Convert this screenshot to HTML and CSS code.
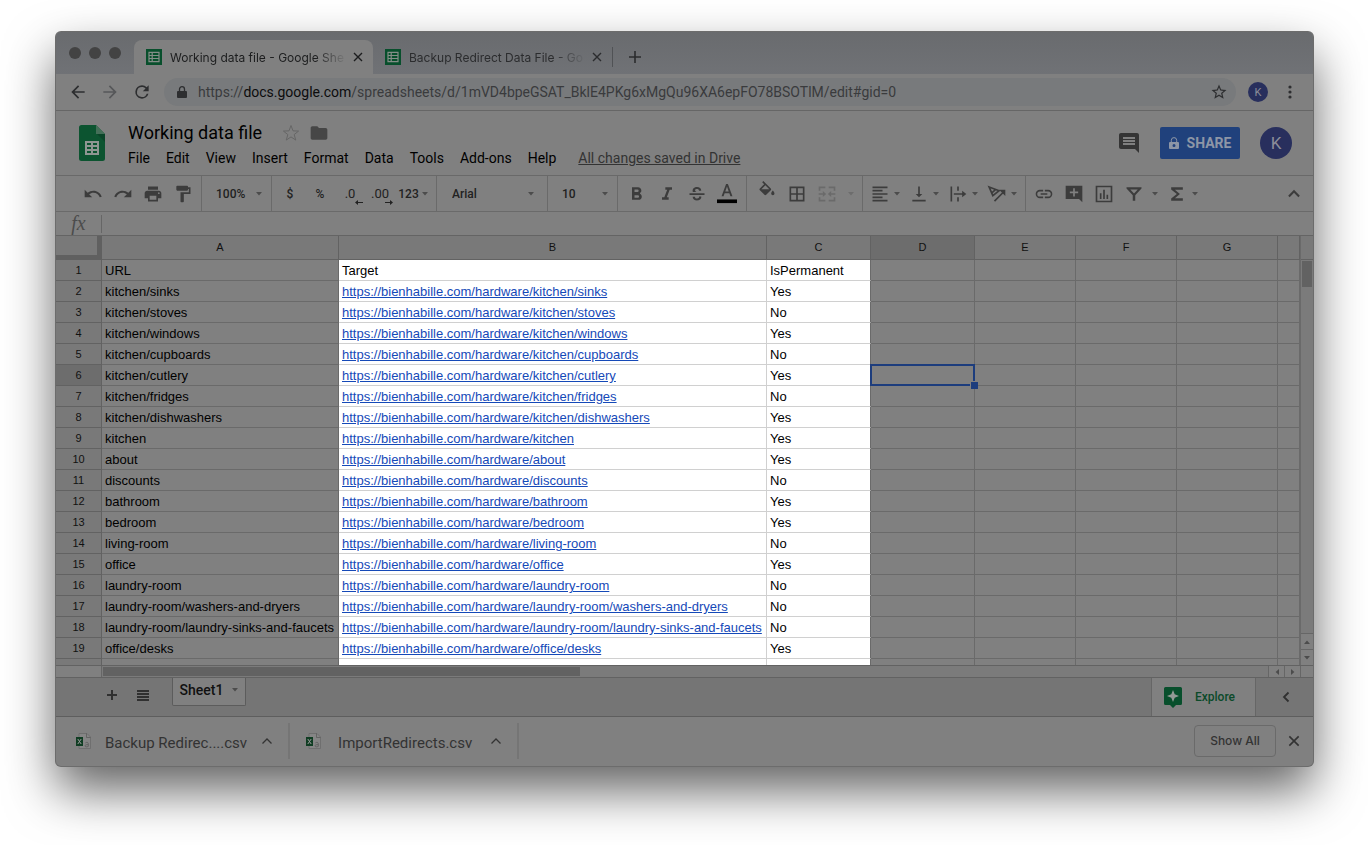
FILE: index.html
```html
<!DOCTYPE html>
<html lang="en">
<head>
<meta charset="utf-8">
<title>Working data file - Google Sheets</title>
<link rel="stylesheet" href="styles.css">
</head>
<body>
<svg class="defs" aria-hidden="true">
  <symbol id="caret" viewBox="0 0 6 4"><path d="M0 0h6L3 3.4z"/></symbol>
  <symbol id="close" viewBox="0 0 12 12"><path d="M2 2l8 8M10 2l-8 8" fill="none" stroke="currentColor" stroke-width="1.4"/></symbol>
  <symbol id="sheet" viewBox="0 0 16 16"><path fill="#084f2c" d="M0 0h16v16H0z"/><path fill="none" stroke="#858d88" stroke-width="1.2" d="M3 3.4h10v9.2H3zM3 6.5h10M3 9.5h10M6.2 3.4v9.2"/></symbol>
  <symbol id="up" viewBox="0 0 12 8"><path d="M1.5 6.5L6 2l4.500 4.500" fill="none" stroke="currentColor" stroke-width="1.300"/></symbol>
  <symbol id="csv" viewBox="0 0 16 16"><path fill="#858585" stroke="#6a6a6a" stroke-width=".8" d="M3 .5h8L14.500 4v11.500H3z"/><path fill="none" stroke="#5c5c5c" stroke-width=".8" d="M10.500.5V4.500h4M9.300 10c1-1 3-.8 3 .6v2.800c-1.800 1-3.300.4-3.300-.6s1.500-1.200 3.200-1.200"/><path fill="#103d23" d="M0 4h7v9H0z"/><path stroke="#999" d="M1.800 6l3.400 5M5.200 6l-3.400 5"/></symbol>
</svg>
<main class="window">
  <header class="tabs">
    <div class="lights"><i></i><i></i><i></i></div>
    <div class="tab active">
      <svg class="favicon"><use href="#sheet"/></svg><span class="tab-title">Working data file - Google Sheets</span>
      <button aria-label="Close tab"><svg class="x"><use href="#close"/></svg></button>
    </div>
    <div class="tab">
      <svg class="favicon"><use href="#sheet"/></svg><span class="tab-title">Backup Redirect Data File - Google Sheets</span>
      <button aria-label="Close tab"><svg class="x"><use href="#close"/></svg></button>
    </div>
    <button class="new-tab" aria-label="New tab"><svg viewBox="0 0 14 14"><path d="M7 1v12M1 7h12" fill="none" stroke="currentColor" stroke-width="1.600"/></svg></button>
  </header>

  <nav class="nav">
    <button aria-label="Back"><svg viewBox="0 0 24 24"><path d="M20 11H7.830l5.590-5.590L12 4l-8 8 8 8 1.410-1.410L7.830 13H20z"/></svg></button>
    <button aria-label="Forward" class="faint"><svg viewBox="0 0 24 24"><path d="M12 4l-1.410 1.410L16.170 11H4v2h12.170l-5.580 5.590L12 20l8-8z"/></svg></button>
    <button aria-label="Reload"><svg viewBox="0 0 24 24"><path d="M17.650 6.350A7.960 7.960 0 0 0 12 4a8 8 0 1 0 7.730 10h-2.080A6 6 0 1 1 12 6c1.660 0 3.140.690 4.220 1.780L13 11h7V4z"/></svg></button>
    <div class="omnibox">
      <svg class="lock" viewBox="0 0 10 12"><path d="M1 5h8a1 1 0 0 1 1 1v5a1 1 0 0 1-1 1H1a1 1 0 0 1-1-1V6a1 1 0 0 1 1-1z"/><path d="M2.500 6V3.200a2.500 2.500 0 0 1 5 0V6" fill="none" stroke="currentColor" stroke-width="1.300"/></svg>
      <a class="url" href="#gid=0">https://<b>docs.google.com</b>/spreadsheets/d/1mVD4bpeGSAT_BklE4PKg6xMgQu96XA6epFO78BSOTlM/edit#gid=0</a>
      <button aria-label="Bookmark"><svg viewBox="0 0 24 24"><path d="M22 9.240l-7.190-.620L12 2 9.190 8.630 2 9.240l5.460 4.730L5.820 21 12 17.270 18.180 21l-1.630-7.030zM12 15.400l-3.760 2.270 1-4.280-3.320-2.880 4.380-.380L12 6.100l1.710 4.040 4.380.380-3.320 2.880 1 4.280z"/></svg></button>
    </div>
    <button class="avatar small">K</button>
    <button aria-label="Menu" class="more"><svg viewBox="0 0 4 14"><circle cx="2" cy="2" r="1.600"/><circle cx="2" cy="7" r="1.600"/><circle cx="2" cy="12" r="1.600"/></svg></button>
  </nav>

  <header class="doc">
    <svg class="logo" viewBox="0 0 26 36"><path fill="#0c5430" d="M2.500 0H17l9 9v24.500a2.500 2.500 0 0 1-2.500 2.500h-21A2.500 2.500 0 0 1 0 33.500v-31A2.500 2.500 0 0 1 2.500 0z"/><path fill="#0a4428" d="M18 9h8v8z"/><path fill="#446f58" d="M17 0l9 9h-9z"/><path fill="#8f9692" fill-rule="evenodd" d="M6 16h14v14H6zm2 2v2h4v-2zm6 0v2h4v-2zm-6 4v2h4v-2zm6 0v2h4v-2zm-6 4v2h4v-2zm6 0v2h4v-2z"/></svg>
    <div class="doc-info">
      <div class="title-row"><h1>Working data file</h1>
        <button aria-label="Star" class="faint"><svg viewBox="0 0 24 24"><path fill="none" stroke="currentColor" stroke-width="1.200" d="M12 3l2.400 6.400 6.700.300-5.300 4.200 1.900 6.600-5.700-3.800-5.700 3.800 1.900-6.600-5.300-4.200 6.700-.300z"/></svg></button>
        <button aria-label="Move to folder"><svg viewBox="0 0 24 24"><path d="M10 4H4c-1.100 0-2 .900-2 2v12c0 1.100.900 2 2 2h16c1.100 0 2-.900 2-2V8c0-1.100-.900-2-2-2h-8z"/></svg></button>
      </div>
      <div class="menus"><button>File</button><button>Edit</button><button>View</button><button>Insert</button><button>Format</button><button>Data</button><button>Tools</button><button>Add-ons</button><button>Help</button><a href="#saved">All changes saved in Drive</a></div>
    </div>
    <button class="comments" aria-label="Comments"><svg viewBox="0 0 24 24"><path d="M21.990 4c0-1.100-.890-2-1.990-2H4c-1.100 0-2 .900-2 2v12c0 1.100.900 2 2 2h14l4 4zM18 14H6v-2h12zm0-3H6V9h12zm0-3H6V6h12z"/></svg></button>
    <button class="share"><svg viewBox="0 0 10 13"><path fill-rule="evenodd" d="M1 5h8a1 1 0 0 1 1 1v5a1 1 0 0 1-1 1H1a1 1 0 0 1-1-1V6a1 1 0 0 1 1-1zm4 2a1.500 1.500 0 1 0 0 3 1.500 1.500 0 0 0 0-3z"/><path d="M2.300 5V3.300a2.700 2.700 0 0 1 5.400 0V5" fill="none" stroke="currentColor"/></svg>SHARE</button>
    <button class="avatar">K</button>
  </header>

  <div class="toolbar">
    <div class="group first">
      <button aria-label="Undo"><svg viewBox="0 0 24 24"><path d="M12.500 8c-2.650 0-5.050.990-6.900 2.600L2 7v9h9l-3.620-3.620c1.390-1.160 3.160-1.880 5.120-1.880 3.540 0 6.550 2.310 7.600 5.500l2.370-.780C21.080 11.030 17.150 8 12.500 8z"/></svg></button>
      <button aria-label="Redo"><svg viewBox="0 0 24 24"><path d="M18.400 10.600C16.550 8.990 14.150 8 11.500 8c-4.650 0-8.580 3.030-9.960 7.220L3.900 16c1.050-3.190 4.050-5.500 7.600-5.500 1.950 0 3.730.720 5.120 1.880L13 16h9V7z"/></svg></button>
      <button aria-label="Print"><svg viewBox="0 0 24 24"><path d="M19 8H5c-1.660 0-3 1.340-3 3v6h4v4h12v-4h4v-6c0-1.660-1.340-3-3-3zm-3 11H8v-5h8zm3-7a1 1 0 1 1 0-2 1 1 0 0 1 0 2zm-1-9H6v4h12z"/></svg></button>
      <button aria-label="Paint format"><svg viewBox="0 0 24 24"><path d="M18 4V3c0-.550-.450-1-1-1H5c-.550 0-1 .450-1 1v4c0 .550.450 1 1 1h12c.550 0 1-.450 1-1V6h1v4H9v11c0 .550.450 1 1 1h2c.550 0 1-.450 1-1v-9h8V4z"/></svg></button>
    </div>
    <div class="group pick short"><select aria-label="Zoom"><option>100%</option></select><svg class="caret"><use href="#caret"/></svg></div>
    <div class="group numbers">
      <button>$</button><button>%</button>
      <button class="decimal" aria-label="Decrease decimal places">.0<svg viewBox="0 0 8 5"><path d="M0 2.500L3 0v2h5v1H3v2z"/></svg></button>
      <button class="decimal" aria-label="Increase decimal places">.00<svg viewBox="0 0 8 5"><path d="M8 2.500L5 0v2H0v1h5v2z"/></svg></button>
      <button class="formats">123<svg class="caret"><use href="#caret"/></svg></button>
    </div>
    <div class="group pick long"><select aria-label="Font"><option>Arial</option></select><svg class="caret"><use href="#caret"/></svg></div>
    <div class="group pick short"><select aria-label="Font size"><option>10</option></select><svg class="caret"><use href="#caret"/></svg></div>
    <div class="group text">
      <button aria-label="Bold"><svg viewBox="0 0 24 24"><path d="M15.600 10.790c.970-.670 1.650-1.770 1.650-2.790 0-2.260-1.750-4-4-4H6v15h8.040c2.090 0 3.710-1.700 3.710-3.790 0-1.520-.860-2.820-2.150-3.420zM9 6.500h3.500a1.500 1.500 0 0 1 0 3H9zm4 10H9v-3h4a1.500 1.500 0 0 1 0 3z"/></svg></button>
      <button aria-label="Italic"><svg viewBox="0 0 24 24"><path d="M10 4v3h2.210l-3.420 9H6v3h8v-3h-2.210l3.420-9H18V4z"/></svg></button>
      <button aria-label="Strikethrough"><svg viewBox="0 0 24 24"><path d="M3 11h18v2.200H3zM7 9.500C6 5.500 9 3.700 12 3.700c3 0 5 1.600 5.100 4.300h-2.700c0-1.400-.900-2.100-2.400-2.100-1.400 0-2.300.600-2.300 1.700 0 .800.500 1.400 1.600 1.900zM6.800 15.200h2.700c.1 1.500 1.200 2.200 2.700 2.200 1.400 0 2.300-.600 2.300-1.700 0-.300 0-.500-.1-.700h2.700c.4 3-2.100 4.700-5 4.700-3.200 0-5.300-1.800-5.300-4.500z"/></svg></button>
      <button aria-label="Text color"><svg class="tall" viewBox="0 0 22 22"><path d="M10 0h2l5 13.500h-2.200l-1.200-3.400H8.400l-1.200 3.400H5zm1 2.700L9.100 8.200h3.800z"/><path fill="#000" d="M0 17h22v4H0z"/></svg></button>
    </div>
    <div class="group cells">
      <button aria-label="Fill color"><svg class="raised" viewBox="0 0 24 24"><path d="M16.560 8.940L7.620 0 6.210 1.410l2.380 2.380-5.150 5.150a1.490 1.490 0 0 0 0 2.120l5.500 5.500c.290.290.680.440 1.060.440s.770-.150 1.060-.440l5.500-5.500c.590-.580.590-1.530 0-2.120zM5.210 10L10 5.210 14.790 10zM19 11.500s-2 2.170-2 3.500a2 2 0 0 0 4 0c0-1.330-2-3.500-2-3.500z"/></svg></button>
      <button aria-label="Borders"><svg viewBox="0 0 24 24"><path d="M3 3v18h18V3zm8 16H5v-6h6zm0-8H5V5h6zm8 8h-6v-6h6zm0-8h-6V5h6z"/></svg></button>
      <button aria-label="Merge cells" class="faint"><svg viewBox="0 0 24 24"><path d="M2 3h8v2H4v3H2zm12 0h8v5h-2V5h-6zM2 16h2v3h6v2H2zm18 0h2v5h-8v-2h6zM2 11h5V8.500l4 3.500-4 3.500V13H2zm20 0h-5V8.500L13 12l4 3.500V13h5z"/></svg></button>
      <svg class="caret faint"><use href="#caret"/></svg>
    </div>
    <div class="group align">
      <button aria-label="Horizontal align"><svg viewBox="0 0 24 24"><path d="M3 3h18v2H3zm0 4h12v2H3zm0 4h18v2H3zm0 4h12v2H3zm0 4h18v2H3z"/></svg><svg class="caret"><use href="#caret"/></svg></button>
      <button aria-label="Vertical align"><svg viewBox="0 0 24 24"><path d="M16 12h-3V3h-2v9H8l4 4zM4 19v2h16v-2z"/></svg><svg class="caret"><use href="#caret"/></svg></button>
      <button aria-label="Text wrapping"><svg viewBox="0 0 24 24"><path d="M3 3h2v18H3zm8 0h2v5h-2zm0 13h2v5h-2zM7 11h10V8l5 4-5 4v-3H7z"/></svg><svg class="caret"><use href="#caret"/></svg></button>
      <button aria-label="Text rotation"><svg viewBox="0 0 24 24"><path fill="none" stroke="currentColor" stroke-width="2" d="M2.500 3.500l12 4.500-7.500 6zM10.500 6.500L5.500 11M9 20.500L19 10.500"/><path d="M14.500 7H22v7.500z"/></svg><svg class="caret"><use href="#caret"/></svg></button>
    </div>
    <div class="group last">
      <button aria-label="Insert link"><svg viewBox="0 0 24 24"><path d="M3.900 12A3.100 3.100 0 0 1 7 8.900h4V7H7a5 5 0 0 0 0 10h4v-1.900H7A3.100 3.100 0 0 1 3.900 12zM8 13h8v-2H8zm9-6h-4v1.900h4a3.100 3.100 0 0 1 0 6.200h-4V17h4a5 5 0 0 0 0-10z"/></svg></button>
      <button aria-label="Insert comment"><svg viewBox="0 0 24 24"><path fill-rule="evenodd" d="M2 2h20v20l-4-4H2zm9 3v4H7v2h4v4h2v-4h4V9h-4V5z"/></svg></button>
      <button aria-label="Insert chart"><svg viewBox="0 0 24 24"><path fill-rule="evenodd" d="M2 2h20v20H2zm2 2v16h16V4zm3 7h2v7H7zm4-4h2v11h-2zm4 6h2v5h-2z"/></svg></button>
      <button aria-label="Filter"><svg viewBox="0 0 24 24"><path fill-rule="evenodd" d="M3 4h18v1.500l-7.500 8V20h-3v-6.500L3 5.500zm4.500 2.500l4.500 5 4.500-5z"/></svg></button><svg class="caret"><use href="#caret"/></svg>
      <button aria-label="Functions"><svg viewBox="0 0 24 24"><path d="M19 4H5v2.500l6.800 5.500L5 17.500V20h14v-3H9.500l6-5-6-5H19z"/></svg></button><svg class="caret tight"><use href="#caret"/></svg>
    </div>
    <button class="collapse" aria-label="Hide menus"><svg viewBox="0 0 24 24"><path d="M12 7l-7 7 1.800 1.800L12 10.600l5.200 5.200L19 14z"/></svg></button>
  </div>

  <div class="formula"><label for="fx">fx</label><input id="fx" type="text" value=""></div>

  <section class="grid">
    <div class="sheet">
      <table>
        <colgroup><col class="c-num"><col class="c-a"><col class="c-b"><col class="c-c"><col class="c-c"><col class="c-e"><col class="c-e"><col class="c-e"><col></colgroup>
        <thead><tr><th class="corner"></th><th>A</th><th>B</th><th>C</th><th class="sel">D</th><th>E</th><th>F</th><th>G</th><th></th></tr></thead>
        <tbody>
          <tr><th>1</th><td>URL</td><td>Target</td><td>IsPermanent</td><td></td><td></td><td></td><td></td><td></td></tr>
          <tr><th>2</th><td>kitchen/sinks</td><td><a href="#2">https://bienhabille.com/hardware/kitchen/sinks</a></td><td>Yes</td><td></td><td></td><td></td><td></td><td></td></tr>
          <tr><th>3</th><td>kitchen/stoves</td><td><a href="#3">https://bienhabille.com/hardware/kitchen/stoves</a></td><td>No</td><td></td><td></td><td></td><td></td><td></td></tr>
          <tr><th>4</th><td>kitchen/windows</td><td><a href="#4">https://bienhabille.com/hardware/kitchen/windows</a></td><td>Yes</td><td></td><td></td><td></td><td></td><td></td></tr>
          <tr><th>5</th><td>kitchen/cupboards</td><td><a href="#5">https://bienhabille.com/hardware/kitchen/cupboards</a></td><td>No</td><td></td><td></td><td></td><td></td><td></td></tr>
          <tr><th class="sel">6</th><td>kitchen/cutlery</td><td><a href="#6">https://bienhabille.com/hardware/kitchen/cutlery</a></td><td>Yes</td><td class="cursor"></td><td></td><td></td><td></td><td></td></tr>
          <tr><th>7</th><td>kitchen/fridges</td><td><a href="#7">https://bienhabille.com/hardware/kitchen/fridges</a></td><td>No</td><td></td><td></td><td></td><td></td><td></td></tr>
          <tr><th>8</th><td>kitchen/dishwashers</td><td><a href="#8">https://bienhabille.com/hardware/kitchen/dishwashers</a></td><td>Yes</td><td></td><td></td><td></td><td></td><td></td></tr>
          <tr><th>9</th><td>kitchen</td><td><a href="#9">https://bienhabille.com/hardware/kitchen</a></td><td>Yes</td><td></td><td></td><td></td><td></td><td></td></tr>
          <tr><th>10</th><td>about</td><td><a href="#10">https://bienhabille.com/hardware/about</a></td><td>Yes</td><td></td><td></td><td></td><td></td><td></td></tr>
          <tr><th>11</th><td>discounts</td><td><a href="#11">https://bienhabille.com/hardware/discounts</a></td><td>No</td><td></td><td></td><td></td><td></td><td></td></tr>
          <tr><th>12</th><td>bathroom</td><td><a href="#12">https://bienhabille.com/hardware/bathroom</a></td><td>Yes</td><td></td><td></td><td></td><td></td><td></td></tr>
          <tr><th>13</th><td>bedroom</td><td><a href="#13">https://bienhabille.com/hardware/bedroom</a></td><td>Yes</td><td></td><td></td><td></td><td></td><td></td></tr>
          <tr><th>14</th><td>living-room</td><td><a href="#14">https://bienhabille.com/hardware/living-room</a></td><td>No</td><td></td><td></td><td></td><td></td><td></td></tr>
          <tr><th>15</th><td>office</td><td><a href="#15">https://bienhabille.com/hardware/office</a></td><td>Yes</td><td></td><td></td><td></td><td></td><td></td></tr>
          <tr><th>16</th><td>laundry-room</td><td><a href="#16">https://bienhabille.com/hardware/laundry-room</a></td><td>No</td><td></td><td></td><td></td><td></td><td></td></tr>
          <tr><th>17</th><td>laundry-room/washers-and-dryers</td><td><a href="#17">https://bienhabille.com/hardware/laundry-room/washers-and-dryers</a></td><td>No</td><td></td><td></td><td></td><td></td><td></td></tr>
          <tr><th>18</th><td>laundry-room/laundry-sinks-and-faucets</td><td><a href="#18">https://bienhabille.com/hardware/laundry-room/laundry-sinks-and-faucets</a></td><td>No</td><td></td><td></td><td></td><td></td><td></td></tr>
          <tr><th>19</th><td>office/desks</td><td><a href="#19">https://bienhabille.com/hardware/office/desks</a></td><td>Yes</td><td></td><td></td><td></td><td></td><td></td></tr>
          <tr><th>20</th><td>office/filing-cabinets</td><td><a href="#20">https://bienhabille.com/hardware/office/filing-cabinets</a></td><td>Yes</td><td></td><td></td><td></td><td></td><td></td></tr>
        </tbody>
      </table>
    </div>
    <div class="vscroll"><div class="vtop"></div><div class="vtrack"><div class="vthumb"></div></div><button aria-label="Scroll up"><svg class="caret flip"><use href="#caret"/></svg></button><button aria-label="Scroll down"><svg class="caret"><use href="#caret"/></svg></button></div>
  </section>
  <div class="hscroll"><div class="hhead"></div><div class="htrack"><div class="hthumb"></div></div><button aria-label="Scroll left"><svg class="caret left"><use href="#caret"/></svg></button><button aria-label="Scroll right"><svg class="caret right"><use href="#caret"/></svg></button><div class="hend"></div></div>

  <footer class="sheets">
    <button aria-label="Add sheet" class="add"><svg viewBox="0 0 12 12"><path d="M6 1v10M1 6h10" fill="none" stroke="currentColor" stroke-width="2"/></svg></button>
    <button aria-label="All sheets" class="all"><svg viewBox="0 0 12 12"><path d="M0 1h12v2H0zm0 3h12v2H0zm0 3h12v2H0zm0 3h12v2H0z"/></svg></button>
    <button class="sheet-tab">Sheet1<svg class="caret"><use href="#caret"/></svg></button>
    <button class="explore"><svg viewBox="0 0 18 21"><path fill="#084f2c" d="M1.500 0h15A1.500 1.500 0 0 1 18 1.500v15a1.500 1.500 0 0 1-1.500 1.500H12l-3 3-3-3H1.500A1.500 1.500 0 0 1 0 16.500v-15A1.500 1.500 0 0 1 1.500 0z"/><path fill="#929a95" d="M9 3l1.700 4.300L15 9l-4.300 1.700L9 15l-1.700-4.300L3 9l4.300-1.700z"/></svg>Explore</button>
    <button class="panel" aria-label="Show side panel"><svg viewBox="0 0 8 12"><path d="M6.500 1.500L2 6l4.500 4.500" fill="none" stroke="currentColor" stroke-width="1.800"/></svg></button>
  </footer>

  <footer class="downloads">
    <div class="file first-file"><svg class="csv"><use href="#csv"/></svg><a href="#backup">Backup Redirec....csv</a><button aria-label="Options"><svg class="up"><use href="#up"/></svg></button></div>
    <div class="file second-file"><svg class="csv"><use href="#csv"/></svg><a href="#import">ImportRedirects.csv</a><button aria-label="Options"><svg class="up"><use href="#up"/></svg></button></div>
    <button class="show-all">Show All</button>
    <button class="dismiss" aria-label="Close downloads bar"><svg class="x"><use href="#close"/></svg></button>
  </footer>
</main>
</body>
</html>
```
FILE: styles.css
```css
* { box-sizing: border-box; }
body {
  margin: 0;
  min-height: 100vh;
  padding: 32px 55px 79px 56px;
  display: flex;
  background: #fff;
  font-family: Roboto, sans-serif;
  color: #000;
}
svg { display: block; fill: currentColor; flex: none; }
button { border: 0; padding: 0; margin: 0; background: none; font: inherit; color: inherit; display: flex; align-items: center; justify-content: center; flex: none; }
.defs { position: absolute; width: 0; height: 0; }
.faint { color: #6a6a6a; }
.caret { width: 6px; height: 4px; color: #4c4c4c; }
.caret.faint { color: #6d6d6d; }
.x { width: 12px; height: 12px; }

.window {
  flex: 1;
  min-width: 0;
  height: calc(100vh - 111px);
  min-height: 480px;
  display: flex;
  flex-direction: column;
  background: #808080;
  border-radius: 5px;
  box-shadow: 0 0 0 1px #6c6c6c, 0 24px 50px rgba(0, 0, 0, .62);
}
.window > * { flex: none; }

/* Browser tabs */
.tabs { display: flex; align-items: flex-end; height: 42px; background: linear-gradient(#696b6e, #707276); border-radius: 5px 5px 0 0; color: #2b2c2e; }
.lights { display: flex; gap: 8px; width: 78px; padding-left: 13px; align-self: center; }
.lights i { width: 12px; height: 12px; border-radius: 50%; background: #434343; }
.tab { display: flex; align-items: center; width: 239px; height: 34px; padding: 0 9px 0 12px; gap: 8px; font: 12px Inter, sans-serif; }
.tab.active { background: #808080; border-radius: 8px 8px 0 0; color: #1c1d1e; }
.favicon { width: 16px; height: 16px; }
.tab-title { flex: 1; min-width: 0; overflow: hidden; white-space: nowrap; mask-image: linear-gradient(90deg, #000 145px, transparent 177px); }
.new-tab { width: 44px; height: 20px; margin-bottom: 7px; border-left: 1px solid #505255; }
.new-tab svg { width: 14px; height: 14px; }

/* Address bar */
.nav { display: flex; align-items: center; height: 37px; padding: 0 17px 0 12px; border-bottom: 1px solid #666; color: #2d2e30; }
.nav svg { width: 20px; height: 20px; }
.nav > button { width: 20px; margin-right: 12px; }
.nav .faint { color: #565759; }
.omnibox { flex: 1; min-width: 0; display: flex; align-items: center; height: 28px; padding: 0 8px 0 13px; border-radius: 14px; background: #787a7c; }
.omnibox .lock { width: 10px; height: 12px; }
.omnibox button svg { width: 18px; height: 18px; }
.url { flex: 1; min-width: 0; overflow: hidden; white-space: nowrap; margin-left: 11px; font-size: 14px; color: #3a3b3d; text-decoration: none; }
.url b { font-weight: 400; color: #0c0c0d; }
.avatar { width: 32px; height: 32px; border-radius: 50%; background: #282f5d; color: #8b8d99; font-size: 17px; }
.nav .avatar.small { height: 20px; margin: 0 20px 0 12px; font-size: 11px; }
.nav .more { width: 4px; margin: 0 4px 0 0; }
.nav .more svg { width: 4px; height: 14px; }

/* Document header */
.doc { display: flex; align-items: center; height: 65px; padding: 0 21px 0 23px; border-bottom: 1px solid #696969; }
.logo { width: 26px; height: 36px; }
.doc-info { flex: 1; min-width: 0; margin: 6px 0 0 23px; }
.title-row { display: flex; align-items: center; height: 24px; }
.title-row h1 { margin: 0 19px 0 0; font-size: 18px; line-height: 24px; font-weight: 400; }
.title-row button { color: #464646; margin-right: 8px; }
.title-row .faint { color: #666; }
.title-row svg { width: 20px; height: 20px; }
.menus { display: flex; gap: 16px; height: 26px; align-items: center; font-size: 14px; white-space: nowrap; }
.menus a { margin-left: 6px; color: #333; }
.comments svg { width: 24px; height: 24px; }
.comments { color: #353535; }
.share { width: 80px; height: 32px; margin: 0 20px 0 19px; gap: 8px; border-radius: 2px; background: #20417c; color: #8d96a6; font-size: 14px; font-weight: 700; }
.share svg { width: 10px; height: 13px; }

/* Formatting toolbar */
.toolbar { display: flex; height: 36px; border-bottom: 1px solid #6a6a6a; color: #3c3c3c; font-size: 12px; font-weight: 500; }
.toolbar svg:not(.caret) { width: 20px; height: 20px; }
.group { display: flex; align-items: center; flex: none; padding-left: 3px; border-right: 1px solid #6a6a6a; }
.group button { width: 30px; height: 30px; }
.group.first { width: 146px; padding-left: 22px; }
.group.short { width: 70px; }
.group.long { width: 111px; }
.group.numbers { width: 165px; }
.group.text { width: 129px; padding-left: 4px; }
.group.cells { width: 116px; padding-left: 5px; }
.group.align { width: 163px; padding-left: 2px; }
.group.last { border: 0; }
.pick { padding: 0 9px 0 14px; }
.pick.long { padding: 0 13px 0 15px; }
.pick select { flex: 1; min-width: 0; padding: 0; appearance: none; border: 0; background: none; color: #222; font: 500 12px Roboto, sans-serif; }
.numbers button { color: #222; }
.numbers .decimal { position: relative; font-size: 13px; font-weight: 400; }
.toolbar .decimal svg { position: absolute; right: 2px; bottom: 4px; width: 8px; height: 5px; }
.numbers .formats { width: 36px; gap: 3px; }
.cells .caret { margin-left: 6px; }
.cells .raised { margin-bottom: 5px; }
.group.align button { width: 39px; gap: 4px; }
.group.last > .caret { margin: 0 4px 0 3px; }
.group.last > .caret.tight { margin: 0; }
.toolbar .collapse { width: 39px; margin-left: auto; }

.formula { display: flex; align-items: center; height: 24px; border-bottom: 1px solid #646464; }
.formula label { width: 46px; height: 18px; border-right: 1px solid #666; text-align: center; font: italic 20px/16px "Liberation Serif", serif; color: #4c4c4c; }
.formula input { flex: 1; height: 20px; border: 0; background: none; }

/* Spreadsheet grid */
.window > .grid { flex: 1; min-height: 0; display: flex; overflow: hidden; }
.sheet { flex: 1; min-width: 0; overflow: hidden; }
table { width: 100%; table-layout: fixed; border-collapse: separate; border-spacing: 0; font: 13px "Liberation Sans", Arial, sans-serif; }
.c-num { width: 46px; }
.c-a { width: 237px; }
.c-b { width: 428px; }
.c-c { width: 104px; }
.c-e { width: 101px; }
th { padding: 0; background: #797979; border: solid #626262; border-width: 0 1px 1px 0; font-size: 11px; font-weight: 400; color: #111; }
thead th { height: 24px; padding-bottom: 2px; }
th.sel { background: #6d6d6d; }
th.corner { border: solid #606060; border-width: 0 5px 5px 0; }
td { height: 21px; padding: 2px 3px 0; line-height: 18px; border: solid #6a6a6a; border-width: 0 1px 1px 0; white-space: nowrap; }
td:nth-child(3), td:nth-child(4) { background: #fff; border-color: #d0d0d0; }
td:nth-child(4) { border-right-color: #6a6a6a; }
td a { color: #1549b8; }
.cursor { position: relative; }
.cursor::before { content: ""; position: absolute; inset: -1px; border: 2px solid #1d3d7d; }
.cursor::after { content: ""; position: absolute; right: -4px; bottom: -4px; width: 7px; height: 7px; background: #1d3d7d; border: solid #808080; border-width: 1px 0 0 1px; }

.vscroll { width: 13px; display: flex; flex-direction: column; border-left: 1px solid #6a6a6a; }
.vtop { height: 24px; border-bottom: 1px solid #626262; background: #797979; }
.vtrack { flex: 1; padding: 1px; background: #7b7b7b; }
.vthumb { height: 26px; background: #626262; }
.vscroll button { height: 16px; border-top: 1px solid #666; }
.flip { transform: rotate(180deg); }
.left { transform: rotate(90deg); }
.right { transform: rotate(-90deg); }
.hscroll { display: flex; height: 13px; border: solid #626262; border-width: 1px 0; }
.hhead { width: 46px; border-right: 1px solid #666; }
.htrack { flex: 1; padding: 1px; background: #7b7b7b; }
.hthumb { width: 41%; height: 100%; background: #626262; }
.hscroll button { width: 16px; border-left: 1px solid #666; }
.hend { width: 13px; border-left: 1px solid #666; }

/* Sheet tabs */
.sheets { display: flex; align-items: center; height: 39px; padding-left: 50px; background: #757575; border-bottom: 1px solid #5e5e5e; color: #303030; }
.sheets .add { margin-bottom: 4px; }
.sheets .add svg { width: 12px; height: 12px; }
.sheets .all { margin: 0 23px 4px 19px; }
.sheets .all svg { width: 12px; height: 12px; }
.sheet-tab { width: 74px; height: 28px; align-self: flex-start; gap: 9px; padding-bottom: 4px; border: 1px solid #5c5c5c; border-top: 0; border-radius: 0 0 2px 2px; background: #808080; color: #111; font-size: 14px; font-weight: 500; }
.explore { width: 105px; align-self: stretch; margin-left: auto; gap: 13px; padding-right: 8px; background: #808080; border: solid #666; border-width: 0 1px; color: #0b4a29; font-size: 12px; font-weight: 500; }
.explore svg { width: 18px; height: 21px; }
.panel { width: 57px; padding-left: 2px; }
.panel svg { width: 8px; height: 12px; }

/* Downloads bar */
.downloads { display: flex; align-items: center; height: 49px; padding: 0 12px 2px 0; color: #333; }
.file { display: flex; align-items: center; height: 36px; padding: 0 15px 0 20px; border-right: 2px solid #757575; }
.file a { margin: 4px 14px 0 13px; font-size: 15px; color: #333; text-decoration: none; }
.second-file { padding-left: 16px; }
.second-file a { margin-left: 16px; margin-right: 18px; }
.csv { width: 16px; height: 16px; }
.up { width: 12px; height: 8px; }
.show-all { width: 82px; height: 32px; margin: 0 11px 0 auto; border: 1px solid #6a6a6a; border-radius: 4px; font: 500 12px Inter, sans-serif; }
.dismiss .x { width: 14px; height: 14px; }
```
